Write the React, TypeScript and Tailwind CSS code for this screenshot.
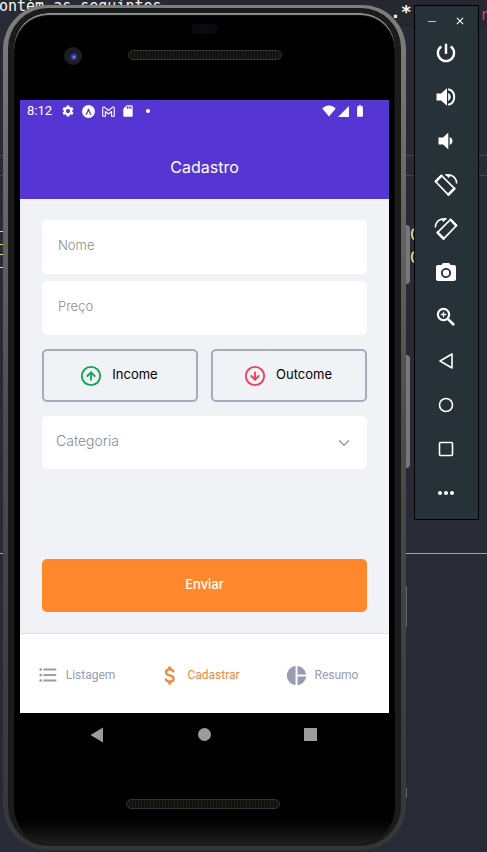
import type { ReactNode } from "react";
import { FiArrowDownCircle, FiArrowUpCircle, FiChevronDown } from "react-icons/fi";
import {
  MdBatteryFull,
  MdClose,
  MdFormatListBulleted,
  MdMoreHoriz,
  MdPhotoCamera,
  MdPieChart,
  MdSdCard,
  MdSettings,
  MdSignalCellular4Bar,
} from "react-icons/md";

const uiFont = "font-['Inter','Open_Sans',sans-serif]";
const systemFont = "font-['Roboto',sans-serif]";

function PowerIcon() {
  return (
    <svg width="24" height="24" viewBox="0 0 24 24" fill="none" stroke="currentColor" strokeWidth="2.4">
      <path d="M12 2.800v10.200M7.300 5.400a8.100 8.100 0 1 0 9.400 0" />
    </svg>
  );
}

function ZoomIcon() {
  return (
    <svg width="24" height="24" viewBox="0 0 24 24" fill="none" stroke="currentColor">
      <circle cx="9.500" cy="9.500" r="5.600" strokeWidth="2.200" />
      <path d="m13.800 13.800 6.200 6.200" strokeWidth="2.600" />
      <path d="M9.500 6.800v5.400M6.800 9.500h5.400" strokeWidth="1.300" />
    </svg>
  );
}

function DollarIcon() {
  return (
    <svg width="23" height="23" viewBox="0 0 24 24" fill="none" stroke="currentColor">
      <path d="M16.200 8.700C16 6.700 14.400 5.600 12.200 5.600c-2.400 0-3.900 1.100-3.900 2.900 0 4.300 8.100 2.400 8.100 6.900 0 1.900-1.600 3-4.100 3-2.600 0-4.200-1.200-4.400-3.300" strokeWidth="2.300" />
      <path d="M12.200 2.600v3M12.200 18.400v3" strokeWidth="3" />
    </svg>
  );
}

function RotateIcon({ mirrored = false }: { mirrored?: boolean }) {
  return (
    <svg width="24" height="24" viewBox="0 0 24 24" fill="none" className={mirrored ? "-scale-x-100" : ""}>
      <path d="M7.500 2.500 1.500 8.500 14.400 21.800 20.600 15.600Z" stroke="currentColor" strokeWidth="1.7" strokeLinejoin="round" />
      <path d="M7.300 2.900 1.900 8.300M14.500 21.500 20.300 15.700" stroke="currentColor" strokeWidth="2.500" strokeLinecap="round" />
      <path d="M11.5 1.900C18 .600 22.600 5 22.700 10.600" stroke="currentColor" strokeWidth="1.500" />
      <path d="M11.200 1.200 17 2.600 14.600 5Z" fill="currentColor" />
    </svg>
  );
}

function VolumeIcon({ loud = false }: { loud?: boolean }) {
  return loud ? (
    <svg width="24" height="24" viewBox="0 0 24 24" fill="currentColor">
      <path d="M2.500 8.500v7h4.600l5.900 5.200V3.300L7.100 8.500Z" />
      <path d="M14.200 8v8c1.500-.8 2.500-2.200 2.500-4s-1-3.200-2.500-4Z" />
      <path d="M14.200 4.200C17.800 5 20.200 8.200 20.200 12s-2.400 7-6 7.800" fill="none" stroke="currentColor" strokeWidth="2" />
    </svg>
  ) : (
    <svg width="24" height="24" viewBox="0 0 24 24" fill="currentColor">
      <path d="M4.500 8.500v7h4.600l5.200 5V3.500l-5.200 5Z" />
      <path d="M15.600 8v8c1.700-.8 2.900-2.200 2.900-4s-1.200-3.200-2.900-4Z" />
    </svg>
  );
}

function ShapeIcon({ children }: { children: ReactNode }) {
  return (
    <svg width="24" height="24" viewBox="0 0 24 24" fill="none" stroke="currentColor" strokeWidth="1.6" strokeLinejoin="round">
      {children}
    </svg>
  );
}

const tools: { label: string; icon: ReactNode }[] = [
  { label: "Power", icon: <PowerIcon /> },
  { label: "Volume up", icon: <VolumeIcon loud /> },
  { label: "Volume down", icon: <VolumeIcon /> },
  { label: "Rotate left", icon: <RotateIcon /> },
  { label: "Rotate right", icon: <RotateIcon mirrored /> },
  { label: "Take screenshot", icon: <MdPhotoCamera size={24} /> },
  { label: "Zoom", icon: <ZoomIcon /> },
  { label: "Back", icon: <ShapeIcon><path d="M18 5v14L6 12Z" /></ShapeIcon> },
  { label: "Home", icon: <ShapeIcon><circle cx="12" cy="12" r="6.5" /></ShapeIcon> },
  { label: "Overview", icon: <ShapeIcon><rect x="5.5" y="5.5" width="13" height="13" rx="1" /></ShapeIcon> },
  { label: "More", icon: <MdMoreHoriz size={24} /> },
];

function Toolbar() {
  return (
    <aside className="w-[65px] shrink-0 self-start border border-black bg-[#263138] pb-1 pr-px text-white">
      <div className="flex h-[25px] items-end justify-center gap-4">
        <button aria-label="Minimize" className="flex h-5 w-3 items-center justify-center">
          <span className="h-px w-2 bg-[#c4c8ca]" />
        </button>
        <button aria-label="Close" className="flex h-5 w-3 items-center justify-center">
          <MdClose size={12} className="shrink-0" />
        </button>
      </div>
      {tools.map((t) => (
        <button key={t.label} aria-label={t.label} className="flex h-11 w-full items-center justify-center">
          {t.icon}
        </button>
      ))}
    </aside>
  );
}

function Speaker() {
  return (
    <div className="h-[10px] rounded-full border border-[#35342f] bg-[repeating-linear-gradient(90deg,#11100f_0px,#11100f_2px,#1f1e1b_2px,#1f1e1b_3px)]" />
  );
}

function StatusBar() {
  return (
    <div className={`flex h-[22px] items-center pl-[7px] pr-[22px] text-[13px] text-white ${systemFont}`}>
      <span className="w-[31px]">8:12</span>
      <div className="flex items-center">
        <span className="flex w-5 justify-center"><MdSettings size={14} /></span>
        <span className="flex w-5 justify-center">
          <svg width="13" height="13" viewBox="0 0 14 14">
            <circle cx="7" cy="7" r="7" fill="#fff" />
            <path d="M3.8 10.2C5 8.6 6 5.8 6.4 4.1q.6-.9 1.2 0C8 5.8 9 8.6 10.2 10.2L9 10.7 7 6.8 5 10.7Z" fill="#5636D3" />
          </svg>
        </span>
        <span className="flex w-5 justify-center">
          <svg width="13" height="11" viewBox="0 0 13 11" fill="none" stroke="#fff" strokeWidth="1.1" strokeLinejoin="round">
            <path d="M.7 10.3V1.6L2 .8l4.500 3.700L11 .8l1.300.8v8.700H9.600V5.500L6.500 8 3.400 5.500v4.800H.7" />
          </svg>
        </span>
        <span className="flex w-5 justify-center"><MdSdCard size={14} /></span>
        <span className="flex w-5 justify-center"><span className="size-1 rounded-full bg-white" /></span>
      </div>
      <div className="ml-auto flex items-center gap-px">
        <svg width="14" height="12" viewBox="0 0 14 12"><path d="M.3 3.500C4-.4 10-.4 13.700 3.500L7 11.600Z" fill="#fff" /></svg>
        <MdSignalCellular4Bar size={13} />
        <MdBatteryFull size={14} className="ml-[2px]" />
      </div>
    </div>
  );
}

function TypeButton({ label, icon }: { label: string; icon: ReactNode }) {
  return (
    <button
      type="button"
      className="flex h-[53px] items-center justify-center gap-[10px] rounded-[5px] border-2 border-[#a6abbf] pr-[2px] text-[13px] text-black"
    >
      {icon}
      <span className="pb-px">{label}</span>
    </button>
  );
}

function RegisterForm() {
  return (
    <form className={`bg-[#f0f2f5] px-[22px] py-[21px] ${uiFont}`} onSubmit={(e) => e.preventDefault()}>
      <div className="flex flex-col gap-[7px]">
        <input
          aria-label="Nome"
          placeholder="Nome"
          className="h-[54px] w-full rounded-[5px] bg-white px-4 pb-1 text-[13px] font-light placeholder:text-[#8c8c8c]"
        />
        <input
          aria-label="Preço"
          placeholder="Preço"
          className="h-[54px] w-full rounded-[5px] bg-white px-4 pb-1 text-[13px] font-light placeholder:text-[#8c8c8c]"
        />
      </div>
      <div className="mt-[14px] grid grid-cols-2 gap-[13px]">
        <TypeButton label="Income" icon={<FiArrowUpCircle size={22} className="text-[#12a454]" />} />
        <TypeButton label="Outcome" icon={<FiArrowDownCircle size={22} className="text-[#e83f5b]" />} />
      </div>
      <div className="relative mt-[14px]">
        <select
          aria-label="Categoria"
          className="block h-[53px] w-full appearance-none rounded-[5px] bg-white px-[14px] pb-1 text-[14px] font-light text-[#848a9f]"
        >
          <option>Categoria</option>
        </select>
        <FiChevronDown size={18} className="pointer-events-none absolute right-[14px] top-[18px] text-[#969cb2]" />
      </div>
      <button
        type="submit"
        className="mt-[90px] h-[53px] w-full rounded-[5px] bg-[#ff872c] pb-[2px] text-[13px] font-medium text-white"
      >
        Enviar
      </button>
    </form>
  );
}

function Tab({ label, icon, active = false }: { label: string; icon: ReactNode; active?: boolean }) {
  return (
    <a
      href="#"
      className={`flex items-center justify-center gap-[6px] pr-3 pt-[3px] text-[12px] ${active ? "text-[#f0883a]" : "text-[#969cb2]"}`}
    >
      <span className="flex w-6 justify-center">{icon}</span>
      {label}
    </a>
  );
}

function Phone() {
  return (
    <div className="relative min-w-0 flex-1 self-start">
      <div className="absolute -right-1 top-[220px] h-[59px] w-2 rounded-sm bg-[#77787a]" />
      <div className="absolute -right-1 top-[350px] h-[113px] w-2 rounded-sm bg-[#77787a]" />
      <div className="absolute -right-px top-[581px] h-[41px] w-2 bg-[#66676b]" />
      <div className="absolute -right-px top-[783px] h-[10px] w-2 bg-[#66676b]" />
      <div className="relative rounded-[44px] bg-linear-to-b from-[#7e7e7c] via-[#4c4c4b] to-[#363636] px-[5px] pb-1 pt-[3px]">
        <div className="overflow-hidden rounded-[40px] border-x-[6px] border-b-2 border-t-[5px] border-[#1b1b1b] bg-black px-[6px] shadow-[inset_0_2px_1px_#8d9696]">
          <div className="h-[87px] pt-[11px]">
            <div className="mx-auto h-[10px] w-[27px] rounded-full bg-[#0a0a0f]" />
            <div className="mt-[13px] grid grid-cols-[1fr_154px_1fr] items-start">
              <div className="ml-11 flex size-[18px] items-center justify-center rounded-full bg-[#1e1e20]">
                <div className="size-[10px] rounded-full bg-[radial-gradient(circle_at_60%_60%,#8d95e8_0%,#27317a_30%,#0c0f25_75%)]" />
              </div>
              <div className="pt-[3px]"><Speaker /></div>
            </div>
          </div>

          <div className="bg-white">
            <header className="bg-[#5636d3] text-white">
              <StatusBar />
              <h1 className={`flex h-[77px] items-center justify-center pt-[13px] text-[16px] ${uiFont}`}>Cadastro</h1>
            </header>
            <RegisterForm />
            <nav className={`grid h-20 grid-cols-3 border-t border-[#dfe1e5] ${systemFont}`}>
              <Tab label="Listagem" icon={<MdFormatListBulleted size={22} />} />
              <Tab label="Cadastrar" icon={<DollarIcon />} active />
              <Tab label="Resumo" icon={<MdPieChart size={23} />} />
            </nav>
          </div>

          <div className="-mx-[6px] bg-linear-to-b from-black from-70% to-[#1f1f1f] px-[6px]">
            <div className="flex h-[43px] items-center justify-between px-[70px] text-[#9c9c9c]">
              <button aria-label="Back">
                <svg width="14" height="16" viewBox="0 0 14 16"><path d="M13 .5v15L.5 8Z" fill="currentColor" /></svg>
              </button>
              <button aria-label="Home" className="size-[13px] rounded-full bg-[#9c9c9c]" />
              <button aria-label="Overview" className="mr-[2px] size-[13px] bg-[#9c9c9c]" />
            </div>
            <div className="h-[88px] pt-[43px]">
              <div className="mx-auto w-[158px] pr-1"><Speaker /></div>
            </div>
          </div>
        </div>
      </div>
    </div>
  );
}

function Editor() {
  return (
    <div className="absolute inset-0 overflow-hidden font-['DejaVu_Sans_Mono',monospace] text-[15px] text-[#f8f8f2]">
      <div className="absolute right-0 top-0 h-[26px] w-[320px] border-b border-[#20212b] bg-[#262731]" />
      <div className="absolute -left-px -top-1 whitespace-nowrap leading-5">ontém as seguintes</div>
      <div className="absolute left-[390px] top-0 text-[18px] font-bold leading-6">.*</div>
      <div className="absolute left-[480px] top-[5px] leading-5 text-[#d8435c]">r</div>
      <div className="absolute inset-x-0 top-[155px] h-[21px] border-y border-[#41445a]" />
      <div className="absolute left-[410px] top-[224px] leading-[23px] text-[#e4ee86]">
        C<br />C
      </div>
      <div className="absolute left-0 top-[231px] h-[14px] w-1 border-y border-[#d5e08a]" />
      <div className="absolute left-0 top-[254px] h-[14px] w-1 border-y border-[#d5e08a]" />
      <div className="absolute inset-x-0 top-[553px] h-px bg-[#b48cf2]" />
    </div>
  );
}

export default function App() {
  return (
    <main className="relative min-h-screen overflow-hidden bg-[#282a36]">
      <Editor />
      <div className="relative flex gap-2 pb-[2px] pl-[3px] pr-2 pt-[5px]">
        <Phone />
        <Toolbar />
      </div>
    </main>
  );
}
